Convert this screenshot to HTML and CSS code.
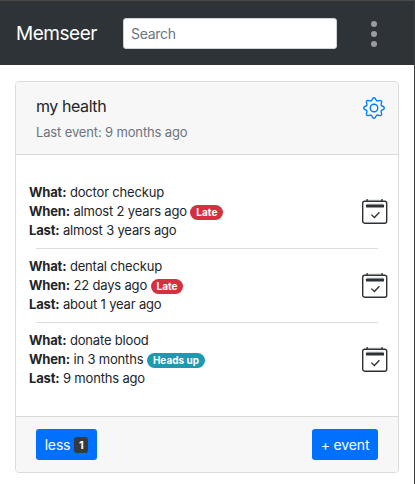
FILE: index.html
```
<!DOCTYPE html>
<html lang="en">
<head>
<meta charset="utf-8">
<title>Memseer</title>
<link rel="stylesheet" href="styles.css">
</head>
<body>
<svg class="defs" width="0" height="0">
  <symbol id="calendar" viewBox="0 0 28 28">
    <path d="M6.2 1v2.5M21 1v2.5" stroke="#343a40" stroke-width="1.6"/>
    <path d="M6.5 2h14" stroke="#d5d9dc" stroke-width="1"/>
    <rect x="1.7" y="3.2" width="24" height="22" rx="2" fill="none" stroke="#2c3136" stroke-width="1.4"/>
    <path d="M6 6h16" stroke="#c2c9cc" stroke-width=".8"/>
    <rect x="5" y="6.6" width="18" height="3" rx=".7" fill="#2c3136"/>
    <path d="M10.3 16.6l3.1 2.9 5-5.2" fill="none" stroke="#2c3136" stroke-width="1.3"/>
  </symbol>
</svg>
<header class="navbar">
  <a class="brand">Memseer</a>
  <input class="search" type="text" placeholder="Search">
  <svg class="dots" width="6" height="26" viewBox="0 0 6 26" fill="#9a9ca0"><circle cx="3" cy="3" r="3"/><circle cx="3" cy="13" r="3"/><circle cx="3" cy="23" r="3"/></svg>
</header>
<main class="content">
  <section class="card">
    <div class="card-header">
      <div>
        <h1 class="title">my health</h1>
        <p class="subtitle">Last event: 9 months ago</p>
      </div>
      <svg class="gear" width="22" height="22" viewBox="0 0 16 16" fill="#007bff"><path d="M8 4.754a3.246 3.246 0 1 0 0 6.492 3.246 3.246 0 0 0 0-6.492zM5.754 8a2.246 2.246 0 1 1 4.492 0 2.246 2.246 0 0 1-4.492 0z"/><path d="M8 .5C9.6 .5 8.9 2.3 10.1 2.8C11.3 3.3 12.1 1.7 13.2 2.8C14.3 3.9 12.7 4.7 13.2 5.9C13.7 7.1 15.5 6.4 15.5 8C15.5 9.6 13.7 8.9 13.2 10.1C12.7 11.3 14.3 12.1 13.2 13.2C12.1 14.3 11.3 12.7 10.1 13.2C8.9 13.7 9.6 15.5 8 15.5C6.4 15.5 7.1 13.7 5.9 13.2C4.7 12.7 3.9 14.3 2.8 13.2C1.7 12.1 3.3 11.3 2.8 10.1C2.3 8.9 .5 9.6 .5 8C.5 6.4 2.3 7.1 2.8 5.9C3.3 4.7 1.7 3.9 2.8 2.8C3.9 1.7 4.7 3.3 5.9 2.8C7.1 2.3 6.4 .5 8 .5Z" fill="none" stroke="#007bff"/></svg>
    </div>
    <div class="card-body">
      <article class="item">
        <div class="details">
          <div><b>What:</b> doctor checkup</div>
          <div><b>When:</b> almost 2 years ago <span class="pill late">Late</span></div>
          <div><b>Last:</b> almost 3 years ago</div>
        </div>
        <svg class="cal" width="28" height="28"><use href="#calendar"/></svg>
      </article>
      <hr>
      <article class="item">
        <div class="details">
          <div><b>What:</b> dental checkup</div>
          <div><b>When:</b> 22 days ago <span class="pill late">Late</span></div>
          <div><b>Last:</b> about 1 year ago</div>
        </div>
        <svg class="cal" width="28" height="28"><use href="#calendar"/></svg>
      </article>
      <hr>
      <article class="item">
        <div class="details">
          <div><b>What:</b> donate blood</div>
          <div><b>When:</b> in 3 months <span class="pill soon">Heads up</span></div>
          <div><b>Last:</b> 9 months ago</div>
        </div>
        <svg class="cal" width="28" height="28"><use href="#calendar"/></svg>
      </article>
    </div>
    <div class="card-footer">
      <button class="btn less">less <span class="count">1</span></button>
      <button class="btn add">+ event</button>
    </div>
  </section>
</main>
</body>
</html>
```
FILE: styles.css
```
* { box-sizing: border-box; }
body {
  margin: 0;
  height: 484px;
  overflow: hidden;
  border-right: 1px solid #3d3e40;
  background: #fff;
  color: #212529;
  font-family: Inter, "Liberation Sans", sans-serif;
  font-size: 13px;
}
.defs { position: absolute; }
.navbar {
  display: flex;
  align-items: center;
  height: 65px;
  padding: 1px 37px 0 16px;
  border-top: 1px solid #494846;
  background: #2e3338;
}
.brand { width: 107px; color: #fff; font-size: 19px; letter-spacing: -.45px; }
.search {
  width: 214px;
  height: 31px;
  padding: 0 8px 0 7px;
  border: 1px solid #ced4da;
  border-radius: 3px;
  background: #fff;
  font: 14px Inter, sans-serif;
  letter-spacing: -.3px;
}
.search::placeholder { color: #6c757d; opacity: 1; }
.dots { margin-left: auto; }
.content { padding: 16px 15px; }
.card {
  height: 392px;
  border: 1px solid #dcdcdc;
  border-radius: 4px;
  background: #fff;
  overflow: hidden;
}
.card-header {
  display: flex;
  justify-content: space-between;
  height: 73px;
  padding: 15px 13px 0 20px;
  border-bottom: 1px solid #d9d9d9;
  background: #f7f7f7;
}
.title { margin: -1px 0 0; font-size: 16px; font-weight: 400; line-height: 20px; letter-spacing: -.42px; }
.subtitle { margin: 7px 0 0; color: #6c757d; font-size: 13px; line-height: 18px; letter-spacing: -.14px; }
.card-body { height: 261px; padding: 28px 9px 0 13px; }
.item { display: flex; justify-content: space-between; height: 65px; }
.details { line-height: 19px; letter-spacing: -.17px; }
.details b { font-weight: 700; }
.cal { margin-top: 15px; }
hr { height: 1px; margin: 0 11px 8px 7px; border: 0; background: #dedede; }
.pill {
  display: inline-block;
  height: 15px;
  padding: 0 6px;
  border-radius: 8px;
  color: #fff;
  font-size: 10px;
  font-weight: 700;
  line-height: 14px;
  letter-spacing: 0;
  vertical-align: 0;
}
.late { background: #d62f3f; }
.soon { background: #1b9ab0; }
.card-footer {
  display: flex;
  justify-content: space-between;
  height: 56px;
  padding: 12px 20px;
  border-top: 1px solid #d9d9d9;
  background: #f7f7f7;
}
.btn {
  display: flex;
  align-items: center;
  justify-content: center;
  gap: 4px;
  height: 31px;
  padding: 0;
  border: 0;
  border-radius: 3px;
  background: #0071ff;
  color: #fff;
  font: 14px Inter, sans-serif;
  letter-spacing: -.15px;
}
.less { width: 61px; }
.add { width: 66px; }
.count {
  width: 14px;
  height: 16px;
  margin-top: 1px;
  border-radius: 3px;
  background: #343a40;
  font-size: 11px;
  font-weight: 700;
  line-height: 16px;
  text-align: center;
}
```
